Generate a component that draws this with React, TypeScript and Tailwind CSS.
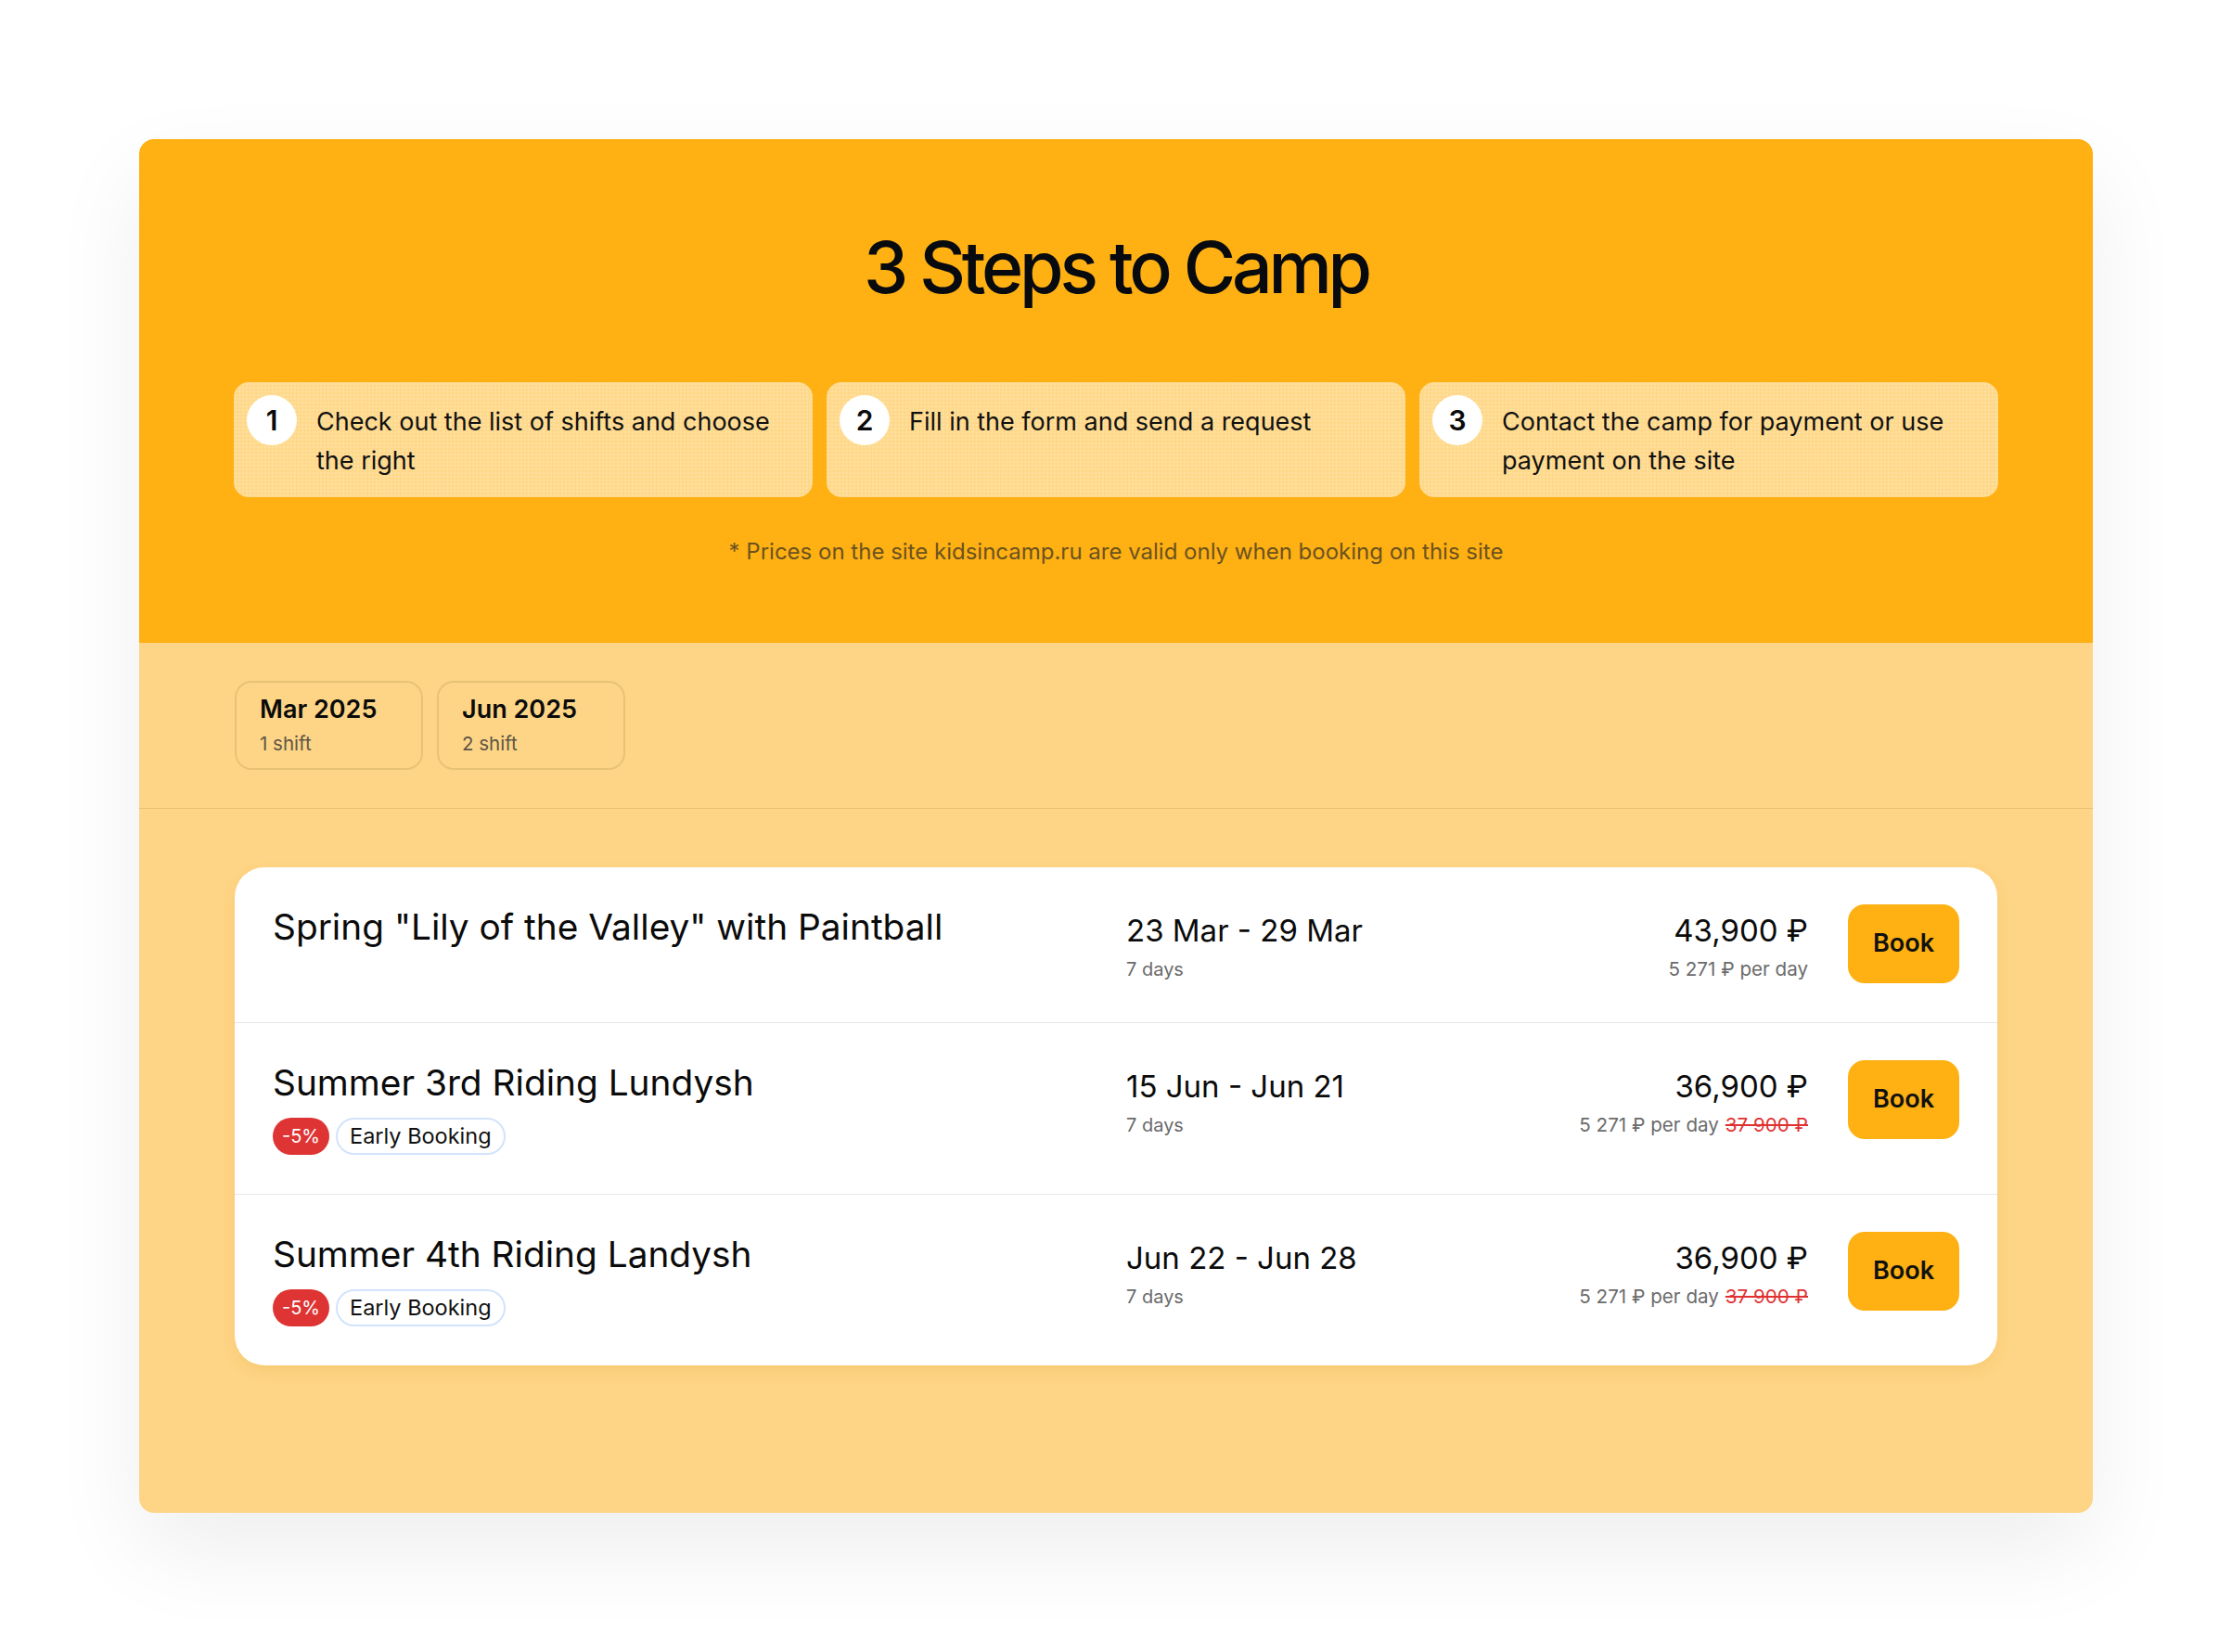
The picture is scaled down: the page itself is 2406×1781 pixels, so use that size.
import React from "react";

// Camp booking block: steps header, month tabs, list of shifts.

interface Shift {
  title: string;
  dates: string;
  days: string;
  price: string;
  perDay: string;
  oldPrice?: string;
  discount?: string;
  tag?: string;
}

const steps = [
  "Check out the list of shifts and choose the right",
  "Fill in the form and send a request",
  "Contact the camp for payment or use payment on the site",
];

const months = [
  { label: "Mar 2025", count: "1 shift" },
  { label: "Jun 2025", count: "2 shift" },
];

const shifts: Shift[] = [
  {
    title: 'Spring "Lily of the Valley" with Paintball',
    dates: "23 Mar - 29 Mar",
    days: "7 days",
    price: "43,900 ₽",
    perDay: "5 271 ₽ per day",
  },
  {
    title: "Summer 3rd Riding Lundysh",
    dates: "15 Jun - Jun 21",
    days: "7 days",
    price: "36,900 ₽",
    perDay: "5 271 ₽ per day",
    oldPrice: "37 900 ₽",
    discount: "-5%",
    tag: "Early Booking",
  },
  {
    title: "Summer 4th Riding Landysh",
    dates: "Jun 22 - Jun 28",
    days: "7 days",
    price: "36,900 ₽",
    perDay: "5 271 ₽ per day",
    oldPrice: "37 900 ₽",
    discount: "-5%",
    tag: "Early Booking",
  },
];

function StepCard({ n, text }: { n: number; text: string }) {
  return (
    <div className="flex items-start gap-[21px] rounded-[16px] bg-[#ffd98b] bg-[radial-gradient(rgba(255,255,255,0.22)_1px,transparent_1px)] bg-[length:4px_4px] p-[14px] pb-[18px]">
      <div className="flex h-[54px] w-[54px] shrink-0 items-center justify-center rounded-full bg-white text-[30px] font-semibold text-[#0b0b0b]">
        {n}
      </div>
      <p className="pt-[8px] pr-[30px] text-[27px] leading-[42px] text-[#111]">{text}</p>
    </div>
  );
}

function ShiftRow({ s, last }: { s: Shift; last: boolean }) {
  return (
    <div
      className={`flex items-start px-[41px] pt-[40px] pb-[42px] ${
        last ? "" : "border-b border-[#e6e6e6]"
      }`}
    >
      <div className="min-w-0 flex-1">
        <h3 className="text-[38.8px] leading-[48px] font-normal text-[#0b0b0b]">{s.title}</h3>
        {s.discount && (
          <div className="mt-[14px] flex items-center gap-[7px]">
            <span className="flex h-[40px] w-[61px] items-center justify-center rounded-full bg-[#de3434] text-[20px] text-white">
              {s.discount}
            </span>
            <span className="flex h-[40px] items-center rounded-full border-2 border-[#d3e3fc] bg-white px-[13px] text-[23.5px] text-[#111]">
              {s.tag}
            </span>
          </div>
        )}
      </div>
      <div className="w-[400px] pt-[6px]">
        <div className="text-[33px] leading-[44px] text-[#0b0b0b]">{s.dates}</div>
        <div className="mt-[6px] text-[20px] leading-[28px] text-[#6b6b6b]">{s.days}</div>
      </div>
      <div className="w-[335px] pt-[6px] text-right">
        <div className="text-[33px] leading-[44px] text-[#0b0b0b]">{s.price}</div>
        <div className="mt-[6px] text-[20.6px] leading-[28px] text-[#6b6b6b]">
          {s.perDay}
          {s.oldPrice && (
            <span className="ml-[7px] text-[#e03131] line-through decoration-[#e03131]">
              {s.oldPrice}
            </span>
          )}
        </div>
      </div>
      <button
        type="button"
        className="ml-[43px] flex h-[85px] w-[120px] shrink-0 items-center justify-center rounded-[18px] bg-[#ffb012] text-[27px] font-semibold text-[#111]"
      >
        Book
      </button>
    </div>
  );
}

export default function App() {
  return (
    <div className="min-h-screen bg-white px-[150px] pt-[150px] pb-[151px] font-['Inter',sans-serif]">
      <div className="overflow-hidden rounded-[16px] shadow-[0_40px_100px_rgba(0,0,0,0.07)]">
        {/* header */}
        <div className="flex h-[543px] flex-col items-center bg-[#ffb012] px-[102px] pt-[100px]">
          <h1 className="text-[77px] leading-none font-medium tracking-[-0.055em] text-[#070a0f]">
            3 Steps to Camp
          </h1>
          <div className="mt-[85px] grid w-full grid-cols-3 gap-[15px]">
            {steps.map((t, i) => (
              <StepCard key={i} n={i + 1} text={t} />
            ))}
          </div>
          <p className="mt-[43px] text-[24px] leading-[32px] text-[#6b5220]">
            * Prices on the site kidsincamp.ru are valid only when booking on this site
          </p>
        </div>

        {/* month tabs */}
        <div className="flex gap-[15px] border-b border-[#e6c070] bg-[#fed586] px-[103px] py-[41px]">
          {months.map((m) => (
            <div
              key={m.label}
              className="h-[96px] w-[203px] rounded-[18px] border-2 border-[#e8c275] px-[25px] pt-[12px]"
            >
              <div className="text-[27px] leading-[34px] font-semibold text-[#0b0b0b]">{m.label}</div>
              <div className="mt-[7px] text-[20.5px] leading-[26px] text-[#5e5546]">{m.count}</div>
            </div>
          ))}
        </div>

        {/* shift list */}
        <div className="h-[759px] bg-[#fed586] px-[103px] pt-[63px]">
          <div className="overflow-hidden rounded-[32px] bg-white shadow-[0_6px_16px_rgba(214,150,30,0.18)]">
            {shifts.map((s, i) => (
              <ShiftRow key={s.title} s={s} last={i === shifts.length - 1} />
            ))}
          </div>
        </div>
      </div>
    </div>
  );
}
